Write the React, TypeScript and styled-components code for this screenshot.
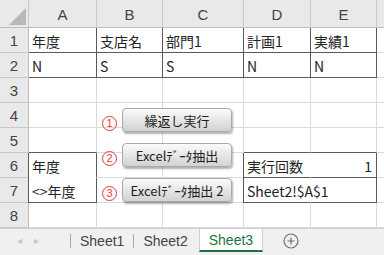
import styled, { createGlobalStyle } from 'styled-components';

const GlobalStyle = createGlobalStyle`
  body {
    margin: 0;
    background: #ffffff;
    overflow: hidden;
    font-family: "Liberation Sans", "Noto Sans CJK JP", sans-serif;
  }
`;

type Line = 'grid' | 'dark' | 'none';

interface CellSpec {
  text?: string;
  r?: Line;
  b?: Line;
  t?: boolean;
  l?: boolean;
  right?: boolean;
}

const COLS = ['A', 'B', 'C', 'D', 'E'];

const boxed: CellSpec = { r: 'dark', b: 'dark' };

const ROWS: CellSpec[][] = [
  [
    { ...boxed, text: '年度' },
    { ...boxed, text: '支店名' },
    { ...boxed, text: '部門1' },
    { ...boxed, text: '計画1' },
    { ...boxed, text: '実績1' },
  ],
  [
    { ...boxed, text: 'N' },
    { ...boxed, text: 'S' },
    { ...boxed, text: 'S' },
    { ...boxed, text: 'N' },
    { ...boxed, text: 'N' },
  ],
  [{}, {}, {}, {}, {}],
  [{}, {}, {}, {}, {}],
  [{ b: 'dark' }, {}, {}, { b: 'dark' }, { b: 'dark' }],
  [
    { text: '年度', l: true, r: 'dark', b: 'none' },
    {},
    {},
    { text: '実行回数', l: true, r: 'none', b: 'dark' },
    { text: '1', right: true, r: 'dark', b: 'dark' },
  ],
  [
    { text: '<>年度', l: true, r: 'dark', b: 'dark' },
    {},
    {},
    { text: 'Sheet2!$A$1', l: true, r: 'none', b: 'dark' },
    { r: 'dark', b: 'dark' },
  ],
  [{}, {}, {}, {}, {}],
];

const SHAPES = [
  { mark: '1', label: '繰返し実行', top: 108 },
  { mark: '2', label: 'Excelﾃﾞｰﾀ抽出', top: 143 },
  { mark: '3', label: 'Excelﾃﾞｰﾀ抽出 2', top: 178 },
];

const lineColor = (v: Line | undefined) =>
  v === 'dark' ? '#5a5a5a' : v === 'none' ? 'transparent' : '#dadada';

const App = () => {
  return (
    <>
      <GlobalStyle />
      <Window>
        <Sheet>
          <Grid>
            <Corner>
              <CornerMark />
            </Corner>
            {COLS.map((c) => (
              <ColHead key={c}>{c}</ColHead>
            ))}
            <ColHead $last />
            {ROWS.map((row, i) => (
              <Row key={i} index={i + 1} cells={row} />
            ))}
          </Grid>
          {SHAPES.map((s) => (
            <ShapeRow key={s.mark} style={{ top: s.top }}>
              <Mark>{s.mark}</Mark>
              <MacroButton>{s.label}</MacroButton>
            </ShapeRow>
          ))}
        </Sheet>
        <TabBar>
          <Arrows>
            <Arrow>◂</Arrow>
            <Arrow>▸</Arrow>
          </Arrows>
          <Sep />
          <Tab>Sheet1</Tab>
          <Sep />
          <Tab>Sheet2</Tab>
          <Tab $active>Sheet3</Tab>
          <AddSheet>
            <svg width="16" height="16" viewBox="0 0 16 16">
              <circle cx="8" cy="8" r="7" fill="none" stroke="#6f6f6f" strokeWidth="1.2" />
              <path d="M8 4.5v7M4.5 8h7" stroke="#6f6f6f" strokeWidth="1.2" />
            </svg>
          </AddSheet>
        </TabBar>
      </Window>
    </>
  );
};

const Row = ({ index, cells }: { index: number; cells: CellSpec[] }) => (
  <>
    <RowHead>{index}</RowHead>
    {cells.map((c, j) => (
      <Cell key={j} $r={c.r} $b={c.b} $t={c.t} $l={c.l} $right={c.right}>
        {c.text}
      </Cell>
    ))}
    <Cell />
  </>
);

export default App;

const Window = styled.div`
  width: 384px;
  height: 255px;
  display: flex;
  flex-direction: column;
  overflow: hidden;
`;

const Sheet = styled.div`
  position: relative;
  height: 228px;
`;

const Grid = styled.div`
  display: grid;
  grid-template-columns: 29px 68px 66px 81px 67px 66px 1fr;
  grid-template-rows: 28px repeat(8, 25px);
`;

const Corner = styled.div`
  position: relative;
  background: #e9e9e9;
  border-right: 1px solid #c8c8c8;
  border-bottom: 1px solid #bdbdbd;
  box-sizing: border-box;
`;

const CornerMark = styled.div`
  position: absolute;
  right: 2px;
  bottom: 2px;
  width: 17px;
  height: 17px;
  background: #b8b8b8;
  clip-path: polygon(100% 0, 100% 100%, 0 100%);
`;

const ColHead = styled.div<{ $last?: boolean }>`
  box-sizing: border-box;
  background: #e9e9e9;
  border-right: ${(p) => (p.$last ? 'none' : '1px solid #c8c8c8')};
  border-bottom: 1px solid #bdbdbd;
  display: flex;
  align-items: center;
  justify-content: center;
  color: #444444;
  font-size: 15px;
  padding-top: 2px;
`;

const RowHead = styled.div`
  box-sizing: border-box;
  background: #e9e9e9;
  border-right: 1px solid #bdbdbd;
  border-bottom: 1px solid #c8c8c8;
  display: flex;
  align-items: center;
  justify-content: center;
  color: #444444;
  font-size: 15px;
`;

const Cell = styled.div<{
  $r?: Line;
  $b?: Line;
  $t?: boolean;
  $l?: boolean;
  $right?: boolean;
}>`
  box-sizing: border-box;
  border-right: 1px solid ${(p) => lineColor(p.$r)};
  border-bottom: 1px solid ${(p) => lineColor(p.$b)};
  box-shadow: ${(p) =>
    [p.$l ? '-1px 0 0 #5a5a5a' : '', p.$t ? '0 -1px 0 #5a5a5a' : '']
      .filter(Boolean)
      .join(', ') || 'none'};
  display: flex;
  align-items: center;
  justify-content: ${(p) => (p.$right ? 'flex-end' : 'flex-start')};
  padding: 1px 4px 0 3px;
  white-space: nowrap;
  overflow: visible;
  min-width: 0;
  font-family: "Noto Sans CJK JP", sans-serif;
  font-size: 14px;
  color: #222222;
`;

const ShapeRow = styled.div`
  position: absolute;
  left: 102px;
  display: flex;
  align-items: center;
  gap: 5px;
`;

/* circled step number, drawn as a ring with the digit inside */
const Mark = styled.span`
  width: 15px;
  height: 15px;
  margin-top: 7px;
  box-sizing: border-box;
  border: 1.3px solid #e53935;
  border-radius: 50%;
  display: flex;
  align-items: center;
  justify-content: center;
  font-family: "Liberation Sans", sans-serif;
  font-size: 11px;
  line-height: 1;
  color: #e53935;
`;

const MacroButton = styled.button`
  width: 110px;
  height: 24px;
  box-sizing: border-box;
  border: 1px solid #a9a9a9;
  border-radius: 4px;
  background: linear-gradient(#fbfbfb, #e4e4e4 55%, #d2d2d2);
  box-shadow: 1px 2px 2px rgba(0, 0, 0, 0.3);
  font-family: "Noto Sans CJK JP", sans-serif;
  font-size: 13px;
  color: #1e1e1e;
  padding: 0;
  white-space: nowrap;
`;

const TabBar = styled.div`
  flex: 1;
  display: flex;
  align-items: stretch;
  background: #f0f0f0;
  border-top: 1px solid #d0d0d0;
  padding-bottom: 3px;
`;

const Arrows = styled.div`
  width: 70px;
  display: flex;
  align-items: center;
  gap: 12px;
  padding-left: 17px;
  box-sizing: border-box;
`;

const Arrow = styled.span`
  color: #c4c4c4;
  font-size: 10px;
`;

const Sep = styled.div`
  width: 1px;
  margin: 5px 0 4px;
  background: #a8a8a8;
`;

const Tab = styled.div<{ $active?: boolean }>`
  display: flex;
  align-items: center;
  padding: 0 9px;
  margin-left: ${(p) => (p.$active ? '2px' : '0')};
  font-size: 14px;
  color: ${(p) => (p.$active ? '#217346' : '#444444')};
  background: ${(p) => (p.$active ? '#ffffff' : 'transparent')};
  border-bottom: ${(p) => (p.$active ? '2px solid #217346' : 'none')};
  border-left: ${(p) => (p.$active ? '1px solid #d0d0d0' : 'none')};
  border-right: ${(p) => (p.$active ? '1px solid #d0d0d0' : 'none')};
`;

const AddSheet = styled.div`
  display: flex;
  align-items: center;
  padding-left: 20px;
`;
